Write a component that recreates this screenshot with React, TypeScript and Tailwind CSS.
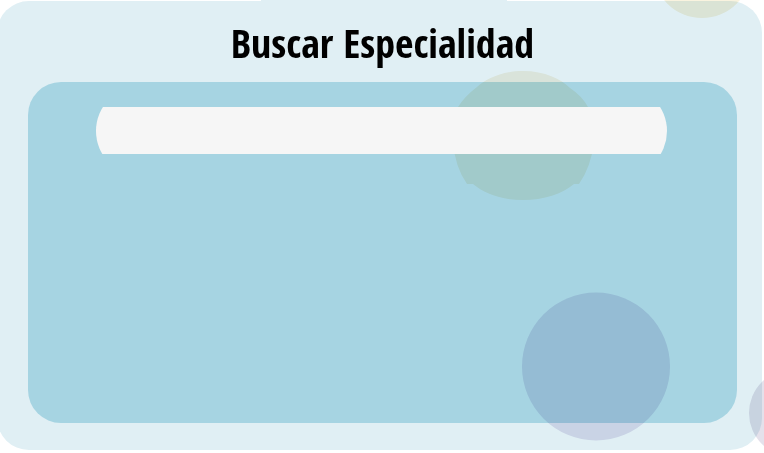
export default function App() {
  return (
    <div className="relative isolate overflow-hidden bg-white pb-[3px]">
      <div className="flex justify-center pl-1">
        <div className="h-px w-[246px] bg-[#e0eff4]" />
      </div>
      <main className="-ml-[3px] mr-[2px] rounded-[32px] bg-[#e0eff4] pb-[27px] pl-[31px] pr-[25px] pt-[14px]">
        <h1 className="mb-[11px] text-center font-['Liberation_Sans_Narrow','Open_Sans_Condensed','Liberation_Sans',sans-serif] text-[40px] font-bold leading-[56px] text-black">
          Buscar Especialidad
        </h1>
        <section className="min-h-[341px] rounded-[33px] bg-[#a6d4e2] pl-[68px] pr-[70px] pt-[25px]">
          <div className="relative z-10 flex h-[47px] items-center overflow-hidden">
            <input
              type="search"
              aria-label="Buscar Especialidad"
              className="h-[90px] w-full shrink-0 appearance-none rounded-full bg-[#f6f6f6] px-8 text-xl text-black outline-none"
            />
          </div>
        </section>
      </main>
      <svg
        aria-hidden="true"
        className="pointer-events-none absolute left-0 top-0 mix-blend-multiply"
        width="764"
        height="453"
        viewBox="0 0 764 453"
      >
        <circle cx="702" cy="-31" r="49" fill="#f9f3df" />
        <path
          d="M523 71C545 71 561 79 570 88Q582 96 588 107Q596 123 594 142Q591 167 579 184L574 184C562 194 544 200 523 200C502 200 485 194 473 184L467 184Q455 167 453 142Q451 123 458 107Q465 96 477 87C486 79 502 71 523 71Z"
          fill="#f8f3e4"
        />
        <circle cx="596" cy="366.5" r="74" fill="#e5e2f0" />
        <circle cx="793" cy="413" r="44" fill="#e4e1eb" />
      </svg>
    </div>
  );
}
